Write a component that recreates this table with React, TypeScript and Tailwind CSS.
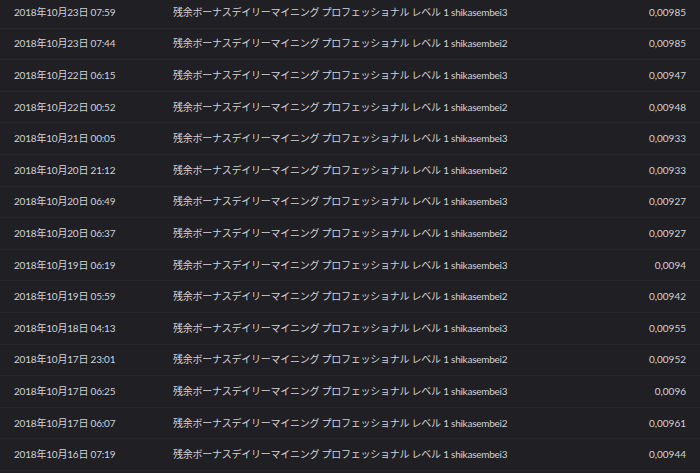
const rows = [
  { date: '2018年10月23日 07:59', user: 'shikasembei3', value: '0,00985' },
  { date: '2018年10月23日 07:44', user: 'shikasembei2', value: '0,00985' },
  { date: '2018年10月22日 06:15', user: 'shikasembei3', value: '0,00947' },
  { date: '2018年10月22日 00:52', user: 'shikasembei2', value: '0,00948' },
  { date: '2018年10月21日 00:05', user: 'shikasembei3', value: '0,00933' },
  { date: '2018年10月20日 21:12', user: 'shikasembei2', value: '0,00933' },
  { date: '2018年10月20日 06:49', user: 'shikasembei3', value: '0,00927' },
  { date: '2018年10月20日 06:37', user: 'shikasembei2', value: '0,00927' },
  { date: '2018年10月19日 06:19', user: 'shikasembei3', value: '0,0094' },
  { date: '2018年10月19日 05:59', user: 'shikasembei2', value: '0,00942' },
  { date: '2018年10月18日 04:13', user: 'shikasembei3', value: '0,00955' },
  { date: '2018年10月17日 23:01', user: 'shikasembei2', value: '0,00952' },
  { date: '2018年10月17日 06:25', user: 'shikasembei3', value: '0,0096' },
  { date: '2018年10月17日 06:07', user: 'shikasembei2', value: '0,00961' },
  { date: '2018年10月16日 07:19', user: 'shikasembei3', value: '0,00944' },
];

const label = '残余ボーナスデイリーマイニング プロフェッショナル レベル 1';

export default function App() {
  return (
    <div
      className="w-[700px] h-[473px] overflow-hidden bg-[#1f1f24] text-[#d2d2d6] text-[10px]"
      style={{ fontFamily: 'Lato, "Noto Sans CJK JP", sans-serif' }}
    >
      <div className="-mt-[3px]">
        {rows.map((r, i) => (
          <div
            key={i}
            className="flex items-center h-[31.6px] border-b border-[#26262b] pl-[14px] pr-[14px]"
          >
            <div className="w-[159px] shrink-0 whitespace-nowrap tracking-[-0.2px]">{r.date}</div>
            <div className="flex-1 whitespace-nowrap tracking-[-0.25px]">
              {label} {r.user}
            </div>
            <div className="text-right whitespace-nowrap">{r.value}</div>
          </div>
        ))}
      </div>
    </div>
  );
}
